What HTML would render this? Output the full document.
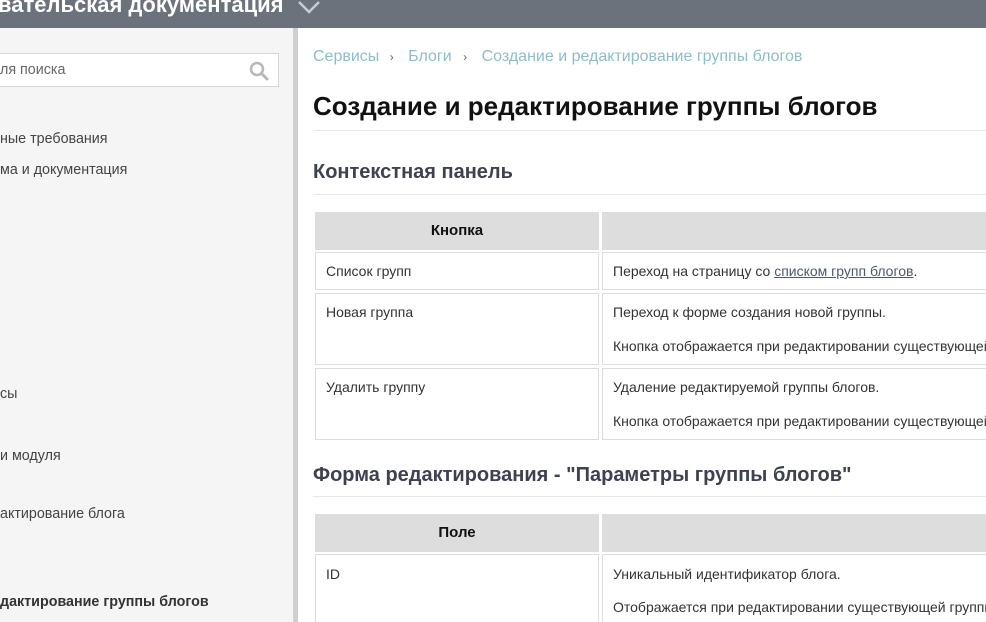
<!DOCTYPE html>
<html><head><meta charset="utf-8"><style>
*{margin:0;padding:0;box-sizing:border-box}
html,body{width:986px;height:622px;overflow:hidden}
body{position:relative;background:#fff;font-family:"Liberation Sans",Arial,sans-serif;color:#333}
.a{position:absolute;white-space:nowrap}
.hdr{left:0;top:0;width:986px;height:28px;background:#6b727c}
.side{left:0;top:28px;width:293px;height:594px;background:#f5f5f5}
.bar{left:293px;top:28px;width:5px;height:594px;background:#cfcfcf}
.s{font-size:14.3px;color:#444;left:0}
.c{position:absolute;border:1px solid #ddd;background:#fff}
.th{background:#dddddd;border-color:#dddddd;font-weight:bold;font-size:15px;color:#111;text-align:center}
.t{font-size:14px;color:#333}
.h2{font-size:20px;font-weight:bold;color:#3d4150}
.line{position:absolute;left:313px;width:673px;height:1px;background:#e8e8e8}
</style></head><body>
<div class="a hdr"></div>
<div class="a" style="left:-2px;top:-8px;font-size:22px;font-weight:bold;color:#fff">вательская документация</div>
<svg class="a" style="left:297px;top:0" width="26" height="16"><path d="M2 2 L12 12 L22 2" stroke="#c8ccd2" stroke-width="2.5" fill="none"/></svg>
<div class="a side"></div>
<div class="a bar"></div>
<div class="a" style="left:-2px;top:53px;width:281px;height:34px;background:#fff;border:1px solid #d6d6d6"></div>
<div class="a" style="left:0;top:62px;font-size:14.3px;color:#666">ля поиска</div>
<svg class="a" style="left:248px;top:60px" width="22" height="22"><circle cx="9" cy="9" r="6" stroke="#b8b8b8" stroke-width="2.5" fill="none"/><path d="M13.5 13.5 L19 19" stroke="#b8b8b8" stroke-width="3" stroke-linecap="round"/></svg>
<div class="a s" style="top:131px">ные требования</div>
<div class="a s" style="top:162px">ма и документация</div>
<div class="a s" style="top:386px">сы</div>
<div class="a s" style="top:448px">и модуля</div>
<div class="a s" style="top:506px">актирование блога</div>
<div class="a s" style="top:594px;font-weight:bold;color:#333">дактирование группы блогов</div>

<div class="a" style="left:313px;top:48px;font-size:16px;color:#8dbccb">Сервисы <span style="font-size:12px;color:#666;margin:0 10px 0 6px">›</span> Блоги <span style="font-size:12px;color:#666;margin:0 10px 0 7px">›</span> Создание и редактирование группы блогов</div>
<div class="a" style="left:313px;top:91px;font-size:26px;font-weight:bold;color:#111">Создание и редактирование группы блогов</div>
<div class="line" style="top:130px"></div>
<div class="a h2" style="left:313px;top:161px">Контекстная панель</div>
<div class="line" style="top:194px"></div>

<div class="c th" style="left:315px;top:212px;width:284px;height:38px;line-height:36px">Кнопка</div>
<div class="c th" style="left:602px;top:212px;width:400px;height:38px"></div>
<div class="c" style="left:315px;top:252px;width:284px;height:38px"></div>
<div class="c" style="left:602px;top:252px;width:400px;height:38px"></div>
<div class="c" style="left:315px;top:293px;width:284px;height:72px"></div>
<div class="c" style="left:602px;top:293px;width:400px;height:72px"></div>
<div class="c" style="left:315px;top:368px;width:284px;height:72px"></div>
<div class="c" style="left:602px;top:368px;width:400px;height:72px"></div>
<div class="a t" style="left:326px;top:263px">Список групп</div>
<div class="a t" style="left:613px;top:263px">Переход на страницу со <span style="color:#4a5a6a;text-decoration:underline">списком групп блогов</span>.</div>
<div class="a t" style="left:326px;top:304px">Новая группа</div>
<div class="a t" style="left:613px;top:304px">Переход к форме создания новой группы.</div>
<div class="a t" style="left:613px;top:338px">Кнопка отображается при редактировании существующей группы.</div>
<div class="a t" style="left:326px;top:379px">Удалить группу</div>
<div class="a t" style="left:613px;top:379px">Удаление редактируемой группы блогов.</div>
<div class="a t" style="left:613px;top:413px">Кнопка отображается при редактировании существующей группы.</div>

<div class="a h2" style="left:313px;top:464px">Форма редактирования - "Параметры группы блогов"</div>
<div class="line" style="top:496px"></div>
<div class="c th" style="left:315px;top:514px;width:284px;height:38px;line-height:36px">Поле</div>
<div class="c th" style="left:602px;top:514px;width:400px;height:38px"></div>
<div class="c" style="left:315px;top:554px;width:284px;height:80px"></div>
<div class="c" style="left:602px;top:554px;width:400px;height:80px"></div>
<div class="a t" style="left:326px;top:566px">ID</div>
<div class="a t" style="left:613px;top:566px">Уникальный идентификатор блога.</div>
<div class="a t" style="left:613px;top:599px">Отображается при редактировании существующей группы.</div>
</body></html>
